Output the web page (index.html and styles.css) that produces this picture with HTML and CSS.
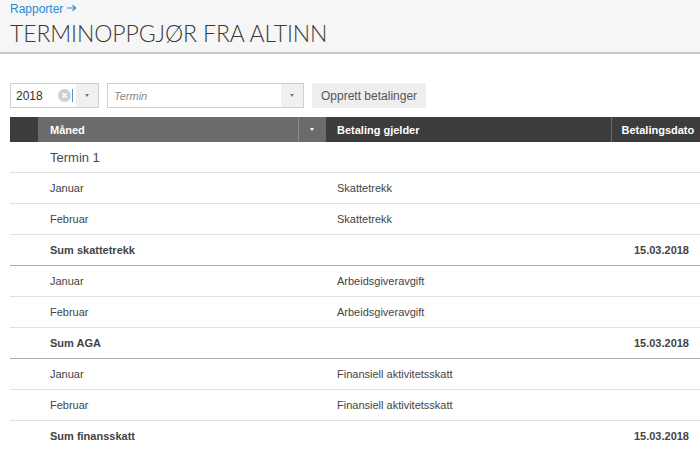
FILE: index.html
```html
<!DOCTYPE html>
<html lang="no">
<head>
    <meta charset="UTF-8">
    <title>Terminoppgjør fra Altinn</title>
    <link rel="stylesheet" href="styles.css">
</head>
<body>
    <header class="page-head">
        <a class="crumb" href="#">Rapporter <span class="crumb-arrow">
            <svg width="10" height="8" viewBox="0 0 10 8">
                <path d="M0 4 H8.5 M5.5 1.2 L8.6 4 L5.5 6.8" stroke="#2a8bd0" stroke-width="1.2" fill="none"/>
            </svg>
        </span></a>
        <h1 class="page-title">TERMINOPPGJØR FRA ALTINN</h1>
    </header>

    <main class="content">
        <div class="toolbar">
            <div class="select select-year">
                <span class="select-value">2018</span>
                <span class="select-clear">
                    <svg width="13" height="13" viewBox="0 0 13 13">
                        <circle cx="6.5" cy="6.5" r="6.5" fill="#cfcfcf"/>
                        <path d="M4.3 4.3 L8.7 8.7 M8.7 4.3 L4.3 8.7" stroke="#fff" stroke-width="1.4"/>
                    </svg>
                </span>
                <span class="select-caret"></span>
                <span class="select-arrow"><i class="caret"></i></span>
            </div>
            <div class="select select-term">
                <span class="select-placeholder">Termin</span>
                <span class="select-arrow"><i class="caret"></i></span>
            </div>
            <button class="btn">Opprett betalinger</button>
        </div>

        <table class="grid">
            <colgroup>
                <col class="col-gutter">
                <col class="col-month">
                <col class="col-sort">
                <col class="col-type">
                <col class="col-date">
            </colgroup>
            <thead>
                <tr>
                    <th class="th-gutter"></th>
                    <th class="th-month">Måned</th>
                    <th class="th-sort"><i class="caret caret-light"></i></th>
                    <th>Betaling gjelder</th>
                    <th class="th-date">Betalingsdato</th>
                </tr>
            </thead>
            <tbody>
                <tr class="group-row">
                    <td></td>
                    <td colspan="4">Termin 1</td>
                </tr>
                <tr>
                    <td></td><td colspan="2">Januar</td><td>Skattetrekk</td><td></td>
                </tr>
                <tr>
                    <td></td><td colspan="2">Februar</td><td>Skattetrekk</td><td></td>
                </tr>
                <tr class="sum-row">
                    <td></td><td colspan="2">Sum skattetrekk</td><td></td><td class="date">15.03.2018</td>
                </tr>
                <tr>
                    <td></td><td colspan="2">Januar</td><td>Arbeidsgiveravgift</td><td></td>
                </tr>
                <tr>
                    <td></td><td colspan="2">Februar</td><td>Arbeidsgiveravgift</td><td></td>
                </tr>
                <tr class="sum-row">
                    <td></td><td colspan="2">Sum AGA</td><td></td><td class="date">15.03.2018</td>
                </tr>
                <tr>
                    <td></td><td colspan="2">Januar</td><td>Finansiell aktivitetsskatt</td><td></td>
                </tr>
                <tr>
                    <td></td><td colspan="2">Februar</td><td>Finansiell aktivitetsskatt</td><td></td>
                </tr>
                <tr class="sum-row">
                    <td></td><td colspan="2">Sum finansskatt</td><td></td><td class="date">15.03.2018</td>
                </tr>
            </tbody>
        </table>
    </main>
</body>
</html>
```

FILE: styles.css
```css
body {
    margin: 0;
    font-family: "Liberation Sans", Arial, sans-serif;
    font-size: 11px;
    color: #444;
    background: #fff;
    overflow: hidden;
}

/* page header */
.page-head {
    background: #f6f6f6;
    border-bottom: 2px solid #c9c9c9;
    padding: 2px 10px 0;
    box-sizing: border-box;
    height: 54px;
}
.crumb {
    display: inline-block;
    font-size: 12px;
    line-height: 14px;
    color: #2a8bd0;
    text-decoration: none;
}
.crumb-arrow svg {
    vertical-align: 1px;
}
.page-title {
    margin: 3px 0 0;
    font-family: Lato, "Liberation Sans", sans-serif;
    font-weight: 300;
    font-size: 23px;
    line-height: 28px;
    letter-spacing: -0.1px;
    color: #3a3a3a;
}

.content {
    padding: 29px 0 0 10px;
}

/* filters */
.toolbar {
    display: flex;
    gap: 8px;
    height: 25px;
    margin-bottom: 9px;
}
.select {
    display: flex;
    align-items: center;
    border: 1px solid #cfcfcf;
    background: #fff;
    box-sizing: border-box;
    height: 25px;
}
.select-year { width: 89px; }
.select-term { width: 197px; }
.select-value {
    padding-left: 5px;
    font-size: 12px;
    color: #333;
    flex: 1;
}
.select-placeholder {
    padding-left: 6px;
    font-size: 11px;
    font-style: italic;
    color: #888;
    flex: 1;
}
.select-clear {
    display: flex;
    margin-right: 1px;
}
.select-caret {
    width: 1px;
    height: 13px;
    background: #5a8fd0;
    margin-right: 3px;
}
.select-arrow {
    width: 22px;
    height: 100%;
    background: #f0f0f0;
    display: flex;
    align-items: center;
    justify-content: center;
}
.caret {
    display: block;
    width: 0;
    height: 0;
    border-left: 2.5px solid transparent;
    border-right: 2.5px solid transparent;
    border-top: 3px solid #777;
}
.caret-light {
    border-top-color: #fff;
    margin: 0 auto;
}
.btn {
    height: 25px;
    padding: 0 9px;
    border: none;
    background: #eee;
    font-family: inherit;
    font-size: 12px;
    color: #555;
}

/* table */
.grid {
    border-collapse: collapse;
    table-layout: fixed;
    width: 690px;
}
.col-gutter { width: 28px; }
.col-month { width: 260px; }
.col-sort { width: 28px; }
.col-type { width: 285px; }
.col-date { width: 89px; }

.grid th {
    height: 25px;
    padding: 0 11px;
    text-align: left;
    font-size: 11px;
    font-weight: bold;
    color: #fff;
    background: #3d3d3d;
    white-space: nowrap;
}
.grid th.th-month {
    background: #6b6b6b;
    padding-left: 12px;
}
.grid th.th-sort {
    background: #6b6b6b;
    border-left: 1px solid #8a8a8a;
    padding: 0;
}
.grid th.th-date {
    border-left: 1px solid #6b6b6b;
    padding: 0 0 0 10px;
}

.grid td {
    height: 30px;
    padding: 0 11px;
    border-bottom: 1px solid #e2e2e2;
    white-space: nowrap;
}
.grid td:first-child {
    padding: 0;
}
.grid td[colspan] {
    padding-left: 12px;
}
.group-row td {
    font-size: 13px;
    color: #4a4a4a;
}
.sum-row td {
    font-weight: bold;
    color: #444;
    border-bottom-color: #ababab;
}
.sum-row td.date {
    text-align: right;
    padding-right: 11px;
}
```
